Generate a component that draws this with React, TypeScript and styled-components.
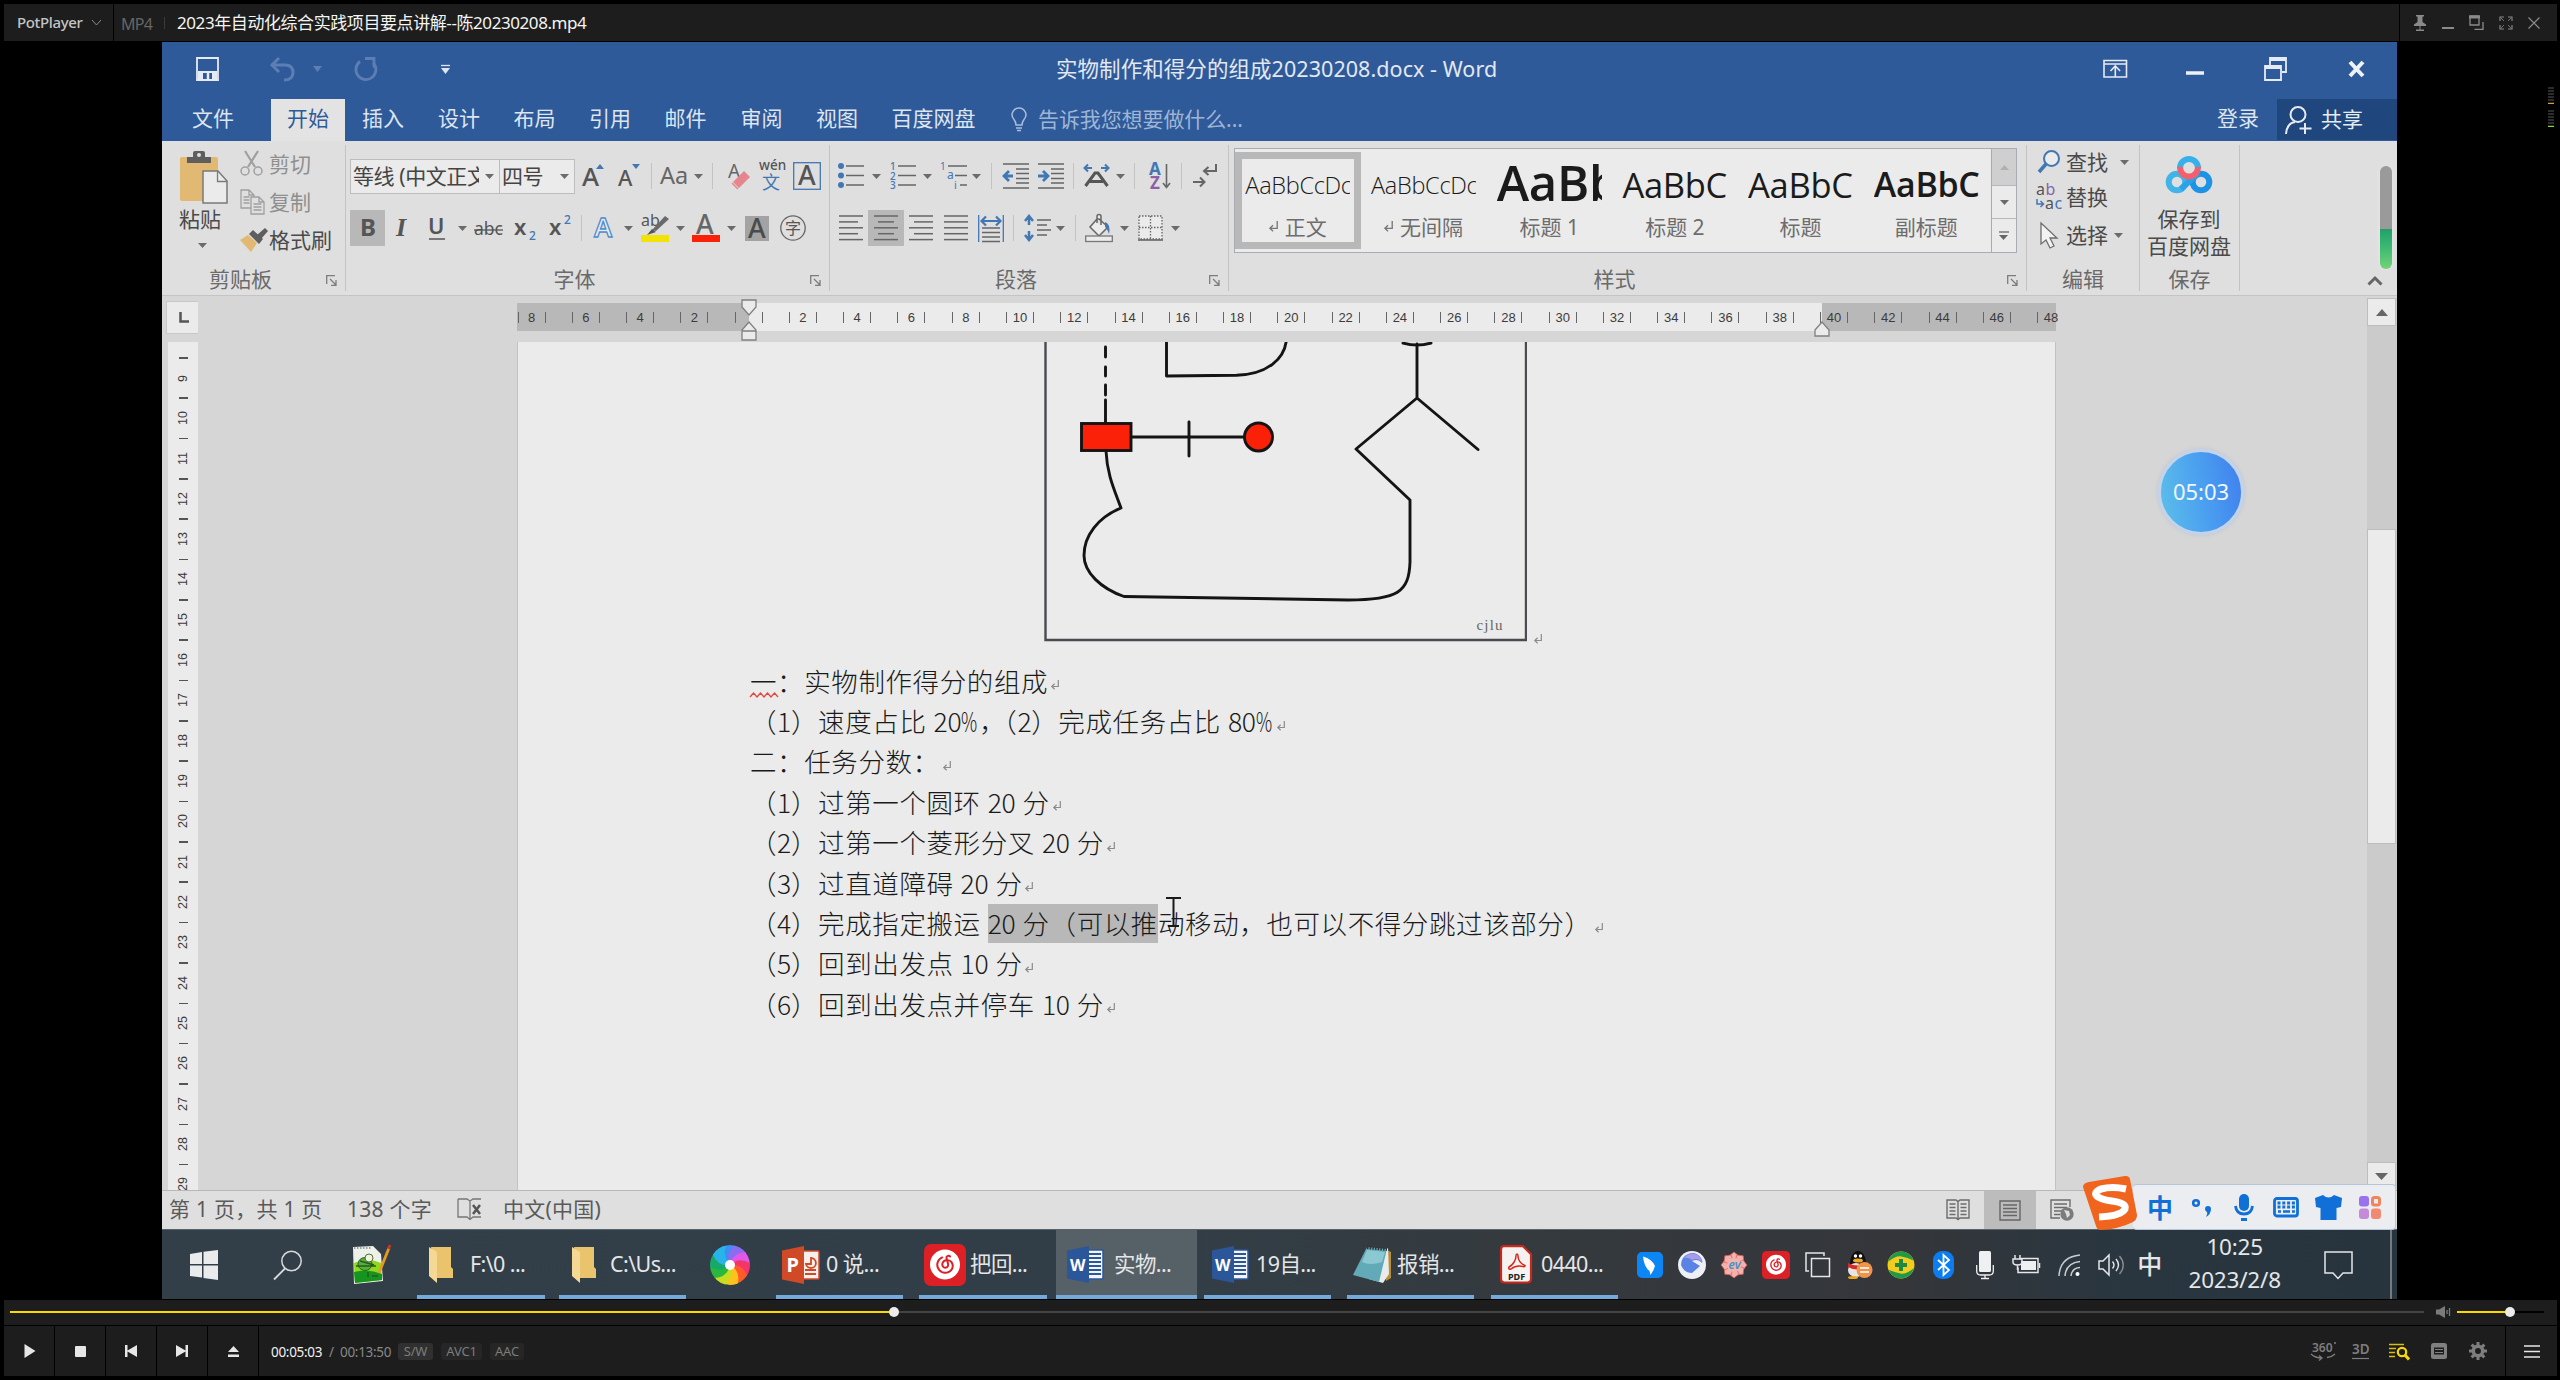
import React from 'react';
import styled, { createGlobalStyle, css } from 'styled-components';
import { SiNeteasecloudmusic } from 'react-icons/si';

const cjk = `'Noto Sans', 'Noto Sans CJK SC', sans-serif`;
const latin = `'Open Sans', 'Noto Sans', 'Noto Sans CJK SC', sans-serif`;

const Global = createGlobalStyle`
  * { box-sizing: border-box; }
  body { margin: 0; background: #000; font-family: ${cjk}; }
  svg { display: block; flex: none; overflow: visible; }
`;

/* ---------- player shell ---------- */
const Player = styled.div`
  position: relative;
  width: 2560px;
  height: 1380px;
  padding: 4px 3px 4px 4px;
  display: flex;
  flex-direction: column;
  background: #000;
  overflow: hidden;
  white-space: nowrap;
`;
const PlayerTitle = styled.header`
  height: 37px;
  display: flex;
  gap: 1px;
  margin-bottom: 1px;
`;
const Panel = styled.div<{ $w?: number; $pl?: number }>`
  ${p => (p.$w ? `width: ${p.$w}px;` : 'flex: 1;')}
  height: 100%;
  padding-left: ${p => p.$pl ?? 0}px;
  background: #1d1d1d;
  display: flex;
  align-items: center;
`;
const Brand = styled.span`
  width: 72px;
  font: 500 15px/20px ${cjk};
  letter-spacing: -0.35px;
  color: #c4c4c4;
  padding-bottom: 1px;
`;
const Format = styled.span`
  width: 43px;
  font: 16px/20px ${cjk};
  letter-spacing: -0.7px;
  color: #666;
  padding-top: 2px;
`;
const FileName = styled.span`
  margin-left: 12px;
  font: 17px/20px ${cjk};
  letter-spacing: -0.42px;
  color: #f4f4f4;
`;
const ThinRule = styled.i`
  width: 1px;
  height: 12px;
  background: #3a3a3a;
`;
const WindowIcons = styled.div`
  display: flex;
  align-items: center;
  gap: 13px;
`;
const Stage = styled.main`
  width: 2235px;
  height: 1257px;
  margin: 0 0 1px 158px;
  display: flex;
  flex-direction: column;
  background: #d6d6d6;
  position: relative;
`;

/* ---------- word: title and tabs ---------- */
const WordTitle = styled.div`
  height: 57px;
  padding: 0 0 3px 34px;
  display: flex;
  align-items: center;
  background: #2f5a99;
`;
const DocName = styled.div`
  width: 1047px;
  color: #e2e8f1;
  font: 21.5px/30px ${cjk};
  letter-spacing: 0.06px;
`;
const TabBar = styled.nav`
  height: 42px;
  display: flex;
  background: #2f5a99;
  color: #dde5f0;
  font: 21px/39px ${cjk};
`;
const Tab = styled.span<{ $w: number; $active?: boolean; $pr?: number }>`
  width: ${p => p.$w}px;
  padding-right: ${p => p.$pr ?? 0}px;
  text-align: center;
  ${p => p.$active && css`background: #e3e3e4; color: #2f5a99;`}
`;
const Ask = styled.span`
  display: flex;
  align-items: center;
  gap: 10px;
  width: 1205px;
  height: 40px;
  padding-left: 16px;
  color: #9fb5d5;
  letter-spacing: -0.1px;
`;
const Share = styled.div`
  width: 120px;
  height: 41px;
  padding-left: 8px;
  display: flex;
  align-items: center;
  gap: 9px;
  background: #1f477d;
  color: #e6ebf3;
`;

/* ---------- ribbon ---------- */
const Ribbon = styled.section`
  height: 155px;
  display: flex;
  background: #dfdfdf;
  border-bottom: 1px solid #c4c4c4;
  color: #4a4a4a;
  font: 21px/26px ${cjk};
`;
const Group = styled.div<{ $w: number }>`
  width: ${p => p.$w}px;
  height: 146px;
  margin-top: 4px;
  display: flex;
  flex-direction: column;
  justify-content: space-between;
  border-right: 1px solid #c3c3c3;
`;
const GroupLabel = styled.div<{ $pr: number }>`
  position: relative;
  height: 26px;
  margin-bottom: -1px;
  padding-right: ${p => p.$pr}px;
  display: flex;
  justify-content: center;
  color: #6a6a6a;
`;
const Launcher = styled.span`
  position: absolute;
  right: 8px;
  top: 9px;
`;
const ToolRows = styled.div`
  padding-top: 5px;
`;
const Tools = styled.div`
  height: 52px;
  display: flex;
  align-items: center;
  padding-left: 4px;
`;
const Slot = styled.span<{ $w: number; $h?: number; $on?: boolean }>`
  width: ${p => p.$w}px;
  height: ${p => p.$h ?? 36}px;
  display: flex;
  align-items: center;
  justify-content: center;
  background: ${p => (p.$on ? '#b8b8b8' : 'transparent')};
`;
const Divider = styled.span<{ $w: number }>`
  width: ${p => p.$w}px;
  display: flex;
  justify-content: center;
  &::before { content: ''; width: 1px; height: 26px; background: #c3c3c3; }
`;
const Combo = styled.div<{ $w: number }>`
  width: ${p => p.$w}px;
  height: 35px;
  padding: 0 5px 0 2px;
  display: flex;
  align-items: center;
  justify-content: space-between;
  border: 1.5px solid #bdbdbd;
  background: #ebebeb;
  & + & { border-left: 0; }
`;
const ComboText = styled.span<{ $w: number }>`
  width: ${p => p.$w}px;
  overflow: hidden;
  letter-spacing: -0.4px;
  color: #444;
`;
const ClipBody = styled.div`
  display: flex;
  padding: 6px 0 0 17px;
`;
const PasteCol = styled.div`
  width: 61px;
  display: flex;
  flex-direction: column;
  align-items: flex-start;
`;
const PasteText = styled.span`
  margin: 1px 0 11px;
`;
const StackCol = styled.div`
  display: flex;
  flex-direction: column;
  margin-top: -1px;
`;
const StackRow = styled.div<{ $iw: number; $dim?: boolean; $h: number }>`
  height: ${p => p.$h}px;
  display: grid;
  grid-template-columns: ${p => p.$iw}px auto auto;
  justify-content: start;
  align-items: center;
  color: ${p => (p.$dim ? '#8f8f8f' : '#4a4a4a')};
`;
const Gallery = styled.div`
  margin: 3px 0 0 5px;
  width: 783px;
  height: 105px;
  display: flex;
  background: #ebebeb;
  border: 1px solid #a9adb3;
`;
const StyleCard = styled.div<{ $on?: boolean }>`
  width: 125.7px;
  height: 97px;
  margin-top: 3px;
  display: flex;
  flex-direction: column;
  align-items: center;
  box-shadow: ${p => (p.$on ? 'inset 0 0 0 7px #b8b8b8' : 'none')};
`;
const Sample = styled.div<{ $size: number; $weight: number; $lh: number }>`
  width: 105px;
  height: 60px;
  overflow: hidden;
  color: #1b1b1b;
  font: ${p => p.$weight} ${p => p.$size}px/${p => p.$lh}px ${latin};
  letter-spacing: -0.3px;
`;
const StyleName = styled.span`
  display: flex;
  align-items: center;
  gap: 7px;
  color: #6d6d6d;
  margin-top: 2px;
`;
const GalleryButtons = styled.div`
  width: 25px;
  margin-left: auto;
  display: grid;
  grid-template-rows: 36px 33px 1fr;
  border-left: 1px solid #a9adb3;
`;
const GalleryButton = styled.span<{ $off?: boolean }>`
  display: flex;
  align-items: center;
  justify-content: center;
  background: ${p => (p.$off ? '#cfcfcf' : '#ebebeb')};
  & + & { border-top: 1px solid #b5b8bc; }
`;
const EditBody = styled.div`
  margin-top: -1px;
`;
const SaveBody = styled.div`
  display: flex;
  flex-direction: column;
  align-items: center;
  padding: 9px 1px 0 0;
  line-height: 27px;
  & > svg { margin-bottom: 12px; }
`;
const RibbonEnd = styled.div`
  flex: 1;
  display: flex;
  flex-direction: column;
  align-items: flex-end;
  padding: 25px 5px 0 0;
`;
const Pill = styled.span`
  width: 12px;
  height: 103px;
  border-radius: 6px;
  background: linear-gradient(#9a9a9a 61%, #1fa168 61%, #3fba72 80%, #74d377);
  box-shadow: 0 0 4px #e9e9e9;
  margin-bottom: 6px;
`;
const Collapse = styled.span`
  margin-right: 9px;
`;

/* ---------- document ---------- */
const DocArea = styled.section`
  height: 894px;
  display: grid;
  grid-template-columns: 36px 1fr 30px;
`;
const VRuler = styled.div`
  padding: 5px 0 0 4px;
  display: flex;
  flex-direction: column;
  overflow: hidden;
`;
const TabStop = styled.div`
  width: 35px;
  height: 33px;
  margin-bottom: 8px;
  flex: none;
  display: grid;
  place-items: center;
  background: #ebebeb;
  border: 1px solid #c8c8c8;
`;
const VStrip = styled.div`
  width: 30px;
  margin-left: 2px;
  padding: 15px 0 0 1px;
  flex: 1;
  background: #ebebeb;
  display: flex;
  flex-direction: column;
  font: 12.5px/13px 'Liberation Sans', sans-serif;
  color: #3c3c3c;
  overflow: hidden;
`;
const VMark = styled.div`
  height: 40.35px;
  flex: none;
  display: flex;
  flex-direction: column;
  align-items: center;
  &::before { content: ''; width: 9px; height: 1.5px; background: #555; margin-bottom: 12px; }
`;
const VNum = styled.span`
  height: 15px;
  writing-mode: vertical-rl;
  transform: rotate(180deg);
  text-align: center;
`;
const Canvas = styled.div`
  display: flex;
  flex-direction: column;
  padding: 7px 0 0 319px;
`;
const HRuler = styled.div`
  position: relative;
  width: 1539px;
  height: 28px;
  flex: none;
  padding-top: 1px;
  display: flex;
  align-items: center;
  background: linear-gradient(90deg, #b8b8b8 232px, #ebebeb 232px, #ebebeb 1305px, #b8b8b8 1305px);
  color: #3c3c3c;
  font: 13px/16px 'Liberation Sans', sans-serif;
`;
const HMark = styled.span<{ $first?: boolean; $last?: boolean }>`
  width: 54.28px;
  flex: none;
  margin-left: ${p => (p.$first ? '-12.500px' : '0')};
  display: flex;
  align-items: center;
  justify-content: center;
  &::before, &::after { content: ''; width: 1px; height: 11px; background: #666; flex: none; }
  &::after { opacity: ${p => (p.$last ? 0 : 1)}; }
`;
const HNum = styled.b`
  width: 26px;
  font-weight: 400;
  text-align: center;
`;
const Marker = styled.span<{ $x: number; $y: number }>`
  position: absolute;
  left: ${p => p.$x}px;
  top: ${p => p.$y}px;
`;
const Sheet = styled.article`
  position: relative;
  width: 1539px;
  flex: 1;
  margin-top: 11px;
  background: #ebebeb;
  border: solid #c2c2c2;
  border-width: 0 1px;
`;
const Picture = styled.div`
  display: flex;
  align-items: flex-end;
  gap: 7px;
  height: 302px;
  padding-left: 526px;
`;
const Body = styled.div`
  padding: 16.5px 0 0 232px;
  text-spacing-trim: space-all;
`;
const Line = styled.p`
  margin: 0;
  height: 40.4px;
  display: flex;
  align-items: center;
  color: #1a1a1a;
  font: 300 26.5px/40px 'Noto Sans CJK SC', sans-serif;
  letter-spacing: 0.6px;
`;
const Digits = styled.span<{ $pad?: boolean; $padEnd?: boolean }>`
  letter-spacing: -0.3px;
  padding-left: ${p => (p.$pad ? 7 : 0)}px;
  padding-right: ${p => (p.$pad || p.$padEnd ? 7 : 0)}px;
`;
const Percent = styled.span`
  display: inline-block;
  width: 17px;
  margin-left: -7px;
  margin-right: 1px;
  transform: scaleX(0.68);
  transform-origin: left;
`;
const HalfComma = styled.span`
  width: 11px;
`;
const Misspelt = styled.span`
  position: relative;
  & > svg { position: absolute; left: 0; top: 31px; }
`;
const Selected = styled.span`
  display: flex;
  height: 39px;
  align-items: center;
  background: #b8b8b8;
`;
const ReturnMark = styled.span`
  margin: 9px 0 0 3px;
`;
const Beam = styled.span`
  position: absolute;
  left: 647px;
  top: 555px;
`;
const ScrollTrack = styled.div`
  margin-top: 2px;
  display: flex;
  flex-direction: column;
  background: #cbcbcb;
  padding-right: 1px;
`;
const ScrollButton = styled.span`
  height: 28px;
  display: grid;
  place-items: center;
  background: #ebebeb;
  border: 1px solid #bdbdbd;
`;
const ScrollThumb = styled.span`
  height: 315px;
  margin: 203px 0 318px;
  background: #ebebeb;
  border: 1px solid #bdbdbd;
`;

/* ---------- status bar ---------- */
const Status = styled.footer`
  height: 39px;
  padding-left: 7px;
  display: flex;
  align-items: center;
  border-top: 1px solid #b8b8b8;
  background: #dfdfdf;
  color: #5a5a5a;
  font: 21px/34px ${cjk};
`;
const StatusItem = styled.span<{ $w: number }>`
  width: ${p => p.$w}px;
  padding-bottom: 2px;
  letter-spacing: 0.25px;
`;
const ViewButton = styled.span<{ $on?: boolean }>`
  width: 52px;
  height: 38px;
  display: grid;
  place-items: center;
  background: ${p => (p.$on ? '#bcbcbc' : 'transparent')};
`;
const Views = styled.div`
  margin-left: auto;
  margin-right: 309px;
  display: flex;
`;

/* ---------- windows taskbar ---------- */
const Taskbar = styled.footer`
  height: 70px;
  display: flex;
  align-items: stretch;
  background: linear-gradient(90deg, #323e48, #323e47 45%, #343a3e 60%, #34363a 78%, #293640 88%, #27343e);
  border-top: 1px solid #59636b;
  color: #e4e6e8;
  font: 21.5px/30px ${cjk};
`;
const PinnedIcon = styled.span<{ $w: number }>`
  width: ${p => p.$w}px;
  display: grid;
  place-items: center;
`;
const Task = styled.div<{ $w: number; $gap: number; $on?: boolean }>`
  width: ${p => p.$w}px;
  margin-right: ${p => p.$gap}px;
  display: flex;
  align-items: center;
  padding-top: 2px;
  border-bottom: 4px solid #74a9dc;
  background: ${p => (p.$on ? '#566067' : 'transparent')};
`;
const TaskIcon = styled.span<{ $w: number }>`
  width: ${p => p.$w}px;
  padding-top: 2px;
  display: flex;
  justify-content: center;
`;
const TaskLabel = styled.span`
  letter-spacing: -0.6px;
`;
const Tray = styled.div`
  display: flex;
  margin-left: 11px;
`;
const TrayIcon = styled.span`
  width: 41.9px;
  display: grid;
  place-items: center;
`;
const TrayIme = styled.span`
  width: 36px;
  font: 500 25px/66px 'Noto Sans CJK SC', sans-serif;
  text-align: center;
`;
const Clock = styled.div`
  width: 134px;
  display: flex;
  flex-direction: column;
  align-items: center;
  padding-top: 1px;
  font: 22.5px/32.5px 'Noto Sans', sans-serif;
  letter-spacing: -0.2px;
`;
const Notify = styled.span`
  width: 73px;
  display: grid;
  place-items: center;
`;
const ShowDesktop = styled.i`
  width: 2px;
  margin-left: 15px;
  background: #737b81;
`;

/* ---------- floating widgets ---------- */
const Timer = styled.div`
  position: absolute;
  left: 1996px;
  top: 407px;
  width: 86px;
  height: 86px;
  padding-bottom: 2px;
  border-radius: 50%;
  border: 3px solid #c3d3ea;
  box-shadow: 0 0 4px #b9c3d4;
  display: grid;
  place-items: center;
  background: linear-gradient(80deg, #5cc0ea, #4a9df0 55%, #3f7fee);
  color: #f0f6fd;
  font: 22px/30px 'Noto Sans', sans-serif;
`;
const ImeBar = styled.div`
  position: absolute;
  left: 1921px;
  top: 1134px;
  width: 313px;
  height: 54px;
  display: flex;
  align-items: flex-end;
`;
const ImeStrip = styled.div`
  width: 274px;
  height: 46px;
  margin: 0 0 0 -4px;
  padding-left: 7px;
  display: grid;
  grid-template-columns: 40px 43px 41px 43px 42px 41px;
  place-items: center;
  align-content: center;
  background: #ebedf1;
  border: 1.5px solid #b4c6da;
  border-left: 0;
  border-radius: 4px;
  color: #1070d8;
  font: 700 26px/34px 'Noto Sans CJK SC', sans-serif;
`;
const ImeLogo = styled.span`
  position: relative;
  z-index: 1;
`;
const Meter = styled.div<{ $y: number; $c: string }>`
  position: absolute;
  right: 6px;
  top: ${p => p.$y}px;
  width: 6px;
  height: 17px;
  background: repeating-linear-gradient(#2c2c2c 0 2px, transparent 2px 3px);
  border-bottom: 1px solid ${p => p.$c};
`;

/* ---------- player controls ---------- */
const SeekRow = styled.div`
  height: 25px;
  margin-bottom: 1px;
  padding: 0 0 1px 6px;
  display: flex;
  align-items: center;
  background: #1d1d1d;
`;
const Seek = styled.div<{ $w: number; $rest: string }>`
  width: ${p => p.$w}px;
  height: 2px;
  display: flex;
  align-items: center;
  background: ${p => p.$rest};
`;
const Played = styled.i`
  height: 2px;
  background: #fbd800;
`;
const Knob = styled.i`
  width: 10px;
  height: 10px;
  margin-left: -5px;
  border-radius: 50%;
  background: #ececec;
`;
const Controls = styled.div`
  height: 50px;
  display: flex;
  gap: 1px;
`;
const ControlButton = styled.button<{ $w?: number }>`
  width: ${p => p.$w ?? 50}px;
  height: 50px;
  padding: 0;
  border: 0;
  display: grid;
  place-items: center;
  background: #1d1d1d;
`;
const Time = styled.span<{ $c: string; $w: number }>`
  width: ${p => p.$w}px;
  color: ${p => p.$c};
  font: 13.5px/18px 'Noto Sans', sans-serif;
  letter-spacing: -0.3px;
  padding-top: 2px;
`;
const Badge = styled.span<{ $w: number; $bg: string }>`
  width: ${p => p.$w}px;
  height: 17px;
  margin-right: 8px;
  border-radius: 3px;
  background: ${p => p.$bg};
  color: #7c7c7c;
  font: 13px/17px 'Noto Sans', sans-serif;
  letter-spacing: -0.2px;
  text-align: center;
`;
const Extras = styled.div`
  margin-left: auto;
  display: grid;
  grid-template-columns: 42px 37px 42px 38px 36px;
  align-items: center;
`;

/* ---------- small shared drawings ---------- */
const Svg = ({ w, h, children, vb }: { w: number; h: number; vb?: string; children: React.ReactNode }) => (
  <svg width={w} height={h} viewBox={vb ?? `0 0 ${w} ${h}`} fill="none">{children}</svg>
);
const Caret = ({ c = '#6b6b6b' }: { c?: string }) => (
  <Svg w={9} h={5}><path d="M0 0h9L4.500 5z" fill={c} /></Svg>
);
const CaretSlot = ({ w }: { w: number }) => <Slot $w={w}><Caret /></Slot>;
const LauncherIcon = () => (
  <Launcher>
    <Svg w={11} h={11}><path d="M.7 9V.7H9M4 4l5.500 5.500M10 5v5.300H5" stroke="#7c7c7c" strokeWidth="1.300" /></Svg>
  </Launcher>
);
const Label = ({ children, end = true }: { children: string; end?: boolean }) => (
  <GroupLabel $pr={end ? 26 : 0}>{children}{end && <LauncherIcon />}</GroupLabel>
);
const Ret = ({ s = 8, c = '#8b8b8b' }: { s?: number; c?: string }) => (
  <Svg w={s} h={s * 1.25} vb="0 0 8 10"><path d="M7.300 0v6.500H1M3.600 3.800L.8 6.500l2.800 2.700" stroke={c} strokeWidth="1.200" /></Svg>
);
const Glyph = ({ x, y, s, c = '#555', w = 400, f = 'Noto Sans', i, children }: any) => (
  <text x={x} y={y} fontSize={s} fill={c} fontWeight={w} fontStyle={i ? 'italic' : 'normal'} fontFamily={f === 'cjk' ? 'Noto Sans CJK SC' : f}>{children}</text>
);
const Rows = ({ spans }: { spans: [number, number][] }) => (
  <Svg w={24} h={26}>
    {spans.map(([a, b], i) => <path key={i} d={`M${a} ${1 + i * 5.9}H${b}`} stroke="#666" strokeWidth="1.500" />)}
  </Svg>
);
const Netease = ({ s }: { s: number }) => (
  <svg width={s} height={s} viewBox="0 0 42 42">
    <rect width="42" height="42" rx="7" fill="#dd1f26" />
    <g transform="translate(6 5.500)"><SiNeteasecloudmusic size={30} color="#fff" /></g>
  </svg>
);
const WordIcon = () => (
  <Svg w={37} h={37}>
    <rect x="20" y="4" width="16" height="29" rx="1" fill="#f2f4f8" stroke="#2b579a" strokeWidth="1.500" />
    <path d="M22 8h12M22 12h12M22 16h12M22 20h12M22 24h12M22 28h12" stroke="#2b579a" strokeWidth="1.800" />
    <path d="M0 4.500L22 0v37L0 32.500z" fill="#2b579a" />
    <Glyph x={3} y={24.500} s={16} c="#fff" w={700}>W</Glyph>
  </Svg>
);
const Folder = () => (
  <Svg w={25} h={36}>
    <path d="M2 0h20v20l2 2v9H8z" fill="#e9c46c" />
    <path d="M0 0l8 5v31l-8-7z" fill="#f5d893" />
  </Svg>
);

const vNumbers = Array.from({ length: 21 }, (_, i) => i + 9);
const hNumbers = Array.from({ length: 29 }, (_, i) => Math.abs(i * 2 - 8));

const RibbonBar = () => (
  <Ribbon>
    <Group $w={184}>
      <ClipBody>
        <PasteCol>
          <Svg w={49} h={54}>
            <rect x="1" y="6" width="38" height="44" rx="2" fill="#e2b972" />
            <path d="M8 12V6h6V2q0-2 2-2h8q2 0 2 2v4h6v6z" fill="#5e5e5e" /><circle cx="20" cy="4" r="2" fill="#dfdfdf" />
            <path d="M24 20h15l9 10v22H24z" fill="#ebebeb" stroke="#7a7a7a" strokeWidth="1.500" /><path d="M38.500 20v10.500H48" stroke="#7a7a7a" strokeWidth="1.300" />
          </Svg>
          <PasteText>粘贴</PasteText>
          <Svg w={45} h={5}><path d="M19 0h9l-4.500 5z" fill="#6b6b6b" /></Svg>
        </PasteCol>
        <StackCol>
          <StackRow $iw={29} $h={27} $dim>
            <Svg w={24} h={25}>
              <path d="M5 0l10 16M18 0L8 16" stroke="#a0a0a0" strokeWidth="2.200" />
              <circle cx="5" cy="20" r="4" stroke="#a0a0a0" strokeWidth="1.500" /><circle cx="18" cy="20" r="4" stroke="#a0a0a0" strokeWidth="1.500" />
            </Svg>剪切
          </StackRow>
          <StackRow $iw={29} $h={49} $dim>
            <Svg w={25} h={26}>
              <path d="M1 1h8l5 5v13H1zM9 1v5h5M3.500 8h6M3.500 11h6M3.500 14h6" stroke="#a0a0a0" strokeWidth="1.300" />
              <path d="M11 8h8l5 5v12H11z" fill="#dfdfdf" stroke="#a0a0a0" strokeWidth="1.300" /><path d="M19 8v5h5M13.500 15h8M13.500 18h8M13.500 21h8" stroke="#a0a0a0" strokeWidth="1.300" />
            </Svg>复制
          </StackRow>
          <StackRow $iw={29} $h={28}>
            <Svg w={28} h={24}>
              <path d="M0 12l8-5 9 8-6 9z" fill="#e2b972" /><path d="M9 6l4-4 10 9-4 5z" fill="#5e5e5e" /><path d="M17 7l8-7 3 3-7 8z" fill="#5e5e5e" />
            </Svg>格式刷
          </StackRow>
        </StackCol>
      </ClipBody>
      <Label>剪贴板</Label>
    </Group>

    <Group $w={484}>
      <ToolRows>
        <Tools>
          <Combo $w={150}><ComboText $w={126}>等线 (中文正文</ComboText><Caret /></Combo>
          <Combo $w={75}><ComboText $w={50}>四号</ComboText><Caret /></Combo>
          <Slot $w={35}><Svg w={22} h={26}><Glyph x={0} y={23} s={26} w={500}>A</Glyph><path d="M14 6l4-5 4 5z" fill="#4377b4" /></Svg></Slot>
          <Slot $w={37}><Svg w={22} h={26}><Glyph x={0} y={23} s={22} w={500}>A</Glyph><path d="M14 1h8l-4 5z" fill="#4377b4" /></Svg></Slot>
          <Divider $w={8} />
          <Slot $w={38}><Svg w={28} h={26}><Glyph x={0} y={21} s={23.500} c="#666">Aa</Glyph></Svg></Slot>
          <CaretSlot w={10} />
          <Divider $w={19} />
          <Slot $w={33}><Svg w={22} h={27}><Glyph x={0} y={15} s={19} c="#666">A</Glyph><path d="M5 19L16 8l6 6-11 11z" fill="#e5868f" /><path d="M4 20l6 6" stroke="#e5868f" strokeWidth="1.500" /></Svg></Slot>
          <Slot $w={33}><Svg w={25} h={30}><Glyph x={0} y={9} s={13.500} w={500}>wén</Glyph><Glyph x={3} y={27.500} s={18} c="#4377b4" f="cjk">文</Glyph></Svg></Slot>
          <Slot $w={37}><Svg w={28} h={28}><rect x=".7" y=".7" width="26.600" height="26.600" stroke="#4377b4" strokeWidth="1.300" /><Glyph x={5} y={23} s={27} w={500}>A</Glyph></Svg></Slot>
        </Tools>
        <Tools>
          <Slot $w={35} $on><Svg w={16} h={22}><Glyph x={0} y={19} s={24} w={700}>B</Glyph></Svg></Slot>
          <Slot $w={33}><Svg w={14} h={22}><Glyph x={1} y={19} s={26} w={700} i f="Liberation Serif">I</Glyph></Svg></Slot>
          <Slot $w={37}><Svg w={18} h={24}><Glyph x={0} y={18} s={22} w={600}>U</Glyph><path d="M1 23h16" stroke="#555" strokeWidth="1.500" /></Svg></Slot>
          <CaretSlot w={15} />
          <Slot $w={38}><Svg w={30} h={22}><Glyph x={0} y={18} s={17.500}>abc</Glyph><path d="M0 13h29" stroke="#555" strokeWidth="1.300" /></Svg></Slot>
          <Slot $w={35}><Svg w={23} h={26}><Glyph x={0} y={20} s={22} w={600}>x</Glyph><Glyph x={15} y={25} s={12} c="#4377b4" w={500}>2</Glyph></Svg></Slot>
          <Slot $w={35}><Svg w={23} h={26}><Glyph x={0} y={20} s={22} w={600}>x</Glyph><Glyph x={15} y={9} s={12} c="#4377b4" w={500}>2</Glyph></Svg></Slot>
          <Divider $w={7} />
          <Slot $w={38}><Svg w={20} h={26}><text x="0" y="22" fontSize="27" fontFamily="Noto Sans" fontWeight="600" fill="#e6ecf4" stroke="#4f8ccb" strokeWidth="1.300">A</text></Svg></Slot>
          <CaretSlot w={10} />
          <Slot $w={43}><Svg w={28} h={28}><Glyph x={0} y={12} s={16} c="#555">ab</Glyph><path d="M24 2l4 3-13 12-4-1z" fill="#6a6a6a" /><path d="M11 15l4 3-9 3z" fill="#555" /><rect y="21" width="28" height="7" fill="#f2e205" /></Svg></Slot>
          <CaretSlot w={9} />
          <Slot $w={42}><Svg w={28} h={28}><Glyph x={4} y={20} s={27} w={500} c="#666">A</Glyph><rect y="21" width="28" height="7" fill="#fb2008" /></Svg></Slot>
          <CaretSlot w={9} />
          <Slot $w={41}><Svg w={24} h={25}><rect width="24" height="25" fill="#a3a3a3" /><Glyph x={3} y={22} s={27} w={500} c="#4b4b4b">A</Glyph></Svg></Slot>
          <Slot $w={31}><Svg w={26} h={26}><circle cx="13" cy="13" r="12.200" stroke="#666" strokeWidth="1.300" /><Glyph x={5} y={19} s={16} f="cjk">字</Glyph></Svg></Slot>
        </Tools>
      </ToolRows>
      <Label>字体</Label>
    </Group>

    <Group $w={399}>
      <ToolRows>
        <Tools>
          <Slot $w={34}><Svg w={26} h={26}>{[3, 12.500, 22].map(y => <g key={y}><circle cx="3" cy={y} r="3" fill="#4377b4" /><path d={`M8 ${y}h18`} stroke="#666" strokeWidth="1.500" /></g>)}</Svg></Slot>
          <CaretSlot w={17} />
          <Slot $w={36}><Svg w={26} h={26}>{[3, 12.500, 22].map((y, i) => <g key={y}><Glyph x={0} y={y + 4} s={10} c="#4377b4" w={500}>{i + 1}</Glyph><path d={`M8 ${y}h18`} stroke="#666" strokeWidth="1.500" /></g>)}</Svg></Slot>
          <CaretSlot w={13} />
          <Slot $w={38}><Svg w={27} h={26}><Glyph x={0} y={7} s={10} c="#4377b4">1</Glyph><Glyph x={7} y={16} s={12} c="#4377b4">a</Glyph><Glyph x={14} y={26} s={11} c="#4377b4">i</Glyph><path d="M8 3h19M15 12.500h12M20 22h7" stroke="#666" strokeWidth="1.500" /></Svg></Slot>
          <CaretSlot w={9} />
          <Divider $w={20} />
          <Slot $w={30}><Svg w={26} h={26}><path d="M0 1h26M13 6h13M13 10.500h13M13 15.500h13M13 20h13M0 25h26" stroke="#666" strokeWidth="1.300" /><path d="M10 13H2M6 8l-5 5 5 5" stroke="#4377b4" strokeWidth="2.800" /></Svg></Slot>
          <Slot $w={39}><Svg w={26} h={26}><path d="M0 1h26M13 6h13M13 10.500h13M13 15.500h13M13 20h13M0 25h26" stroke="#666" strokeWidth="1.300" /><path d="M0 13h9M5 8l5 5-5 5" stroke="#4377b4" strokeWidth="2.800" /></Svg></Slot>
          <Divider $w={7} />
          <Slot $w={39}><Svg w={27} h={26}><path d="M9 5H1.500M5 1.500L1.500 5 5 8.500M18 5h7.500M22 1.500L25.500 5 22 8.500" stroke="#4377b4" strokeWidth="2" /><path d="M2.500 23l9.500-13h3l9.500 13M7 18.500h13" stroke="#555" strokeWidth="3" /></Svg></Slot>
          <CaretSlot w={8} />
          <Divider $w={21} />
          <Slot $w={30}><Svg w={22} h={28}><Glyph x={0} y={13} s={17} c="#4377b4" w={700}>A</Glyph><Glyph x={1} y={27} s={17} c="#8d5fa8" w={700}>Z</Glyph><path d="M17.500 2v23M14 21l3.500 4.500 3.500-4.500" stroke="#666" strokeWidth="1.600" /></Svg></Slot>
          <Divider $w={12} />
          <Slot $w={36}><Svg w={24} h={24}><path d="M23 0v7H12M15.500 3L11 7l4.500 4M0 18h11M7 13.500l4.500 4.500L7 22.500" stroke="#666" strokeWidth="2" /></Svg></Slot>
        </Tools>
        <Tools>
          <Slot $w={34}><Rows spans={[[0, 24], [0, 19], [0, 24], [0, 19], [0, 24]]} /></Slot>
          <Slot $w={36} $on><Rows spans={[[0, 24], [4, 20], [0, 24], [4, 20], [0, 24]]} /></Slot>
          <Slot $w={34}><Rows spans={[[0, 24], [5, 24], [0, 24], [5, 24], [0, 24]]} /></Slot>
          <Slot $w={36}><Rows spans={[[0, 24], [0, 24], [0, 24], [0, 24], [0, 24]]} /></Slot>
          <Slot $w={34}><Svg w={26} h={27}><path d="M.7 0v27M25.300 0v27" stroke="#4377b4" strokeWidth="1.300" /><path d="M4 6h18M8 1.500L3.500 6 8 10.500M18 1.500L22.500 6 18 10.500" stroke="#4377b4" strokeWidth="2.200" /><path d="M4 13h18M4 17.500h18M4 22h18M4 26.500h18" stroke="#666" strokeWidth="1.300" /></Svg></Slot>
          <Divider $w={11} />
          <Slot $w={37}><Svg w={27} h={26}><path d="M5 1v9M1 6l4-5 4 5M5 25v-9M1 20l4 5 4-5" stroke="#4377b4" strokeWidth="2.500" /><path d="M13 5h14M13 10h10M13 15h14M13 20h10" stroke="#666" strokeWidth="1.500" /></Svg></Slot>
          <CaretSlot w={9} />
          <Divider $w={20} />
          <Slot $w={28}><Svg w={28} h={28}><path d="M12 5L5 13l9 9 9-9-9-8zM12 9V2.500q0-2 2-2t2 2V11" stroke="#666" strokeWidth="1.500" fill="#ebebeb" /><path d="M20 8q6 2 4 12-2-6-4-7z" fill="#4377b4" /><rect x=".7" y="22" width="26.600" height="5.500" fill="#ebebeb" stroke="#777" strokeWidth="1.300" /></Svg></Slot>
          <CaretSlot w={22} />
          <Slot $w={30}><Svg w={25} h={26}><rect x="1" y="1" width="23" height="23" fill="#ebebeb" stroke="#666" strokeWidth="1.300" strokeDasharray="1.500 1.500" /><path d="M12.500 1v24M1 12.500h24" stroke="#666" strokeWidth="1.300" strokeDasharray="1.500 1.500" /><path d="M0 25h25" stroke="#666" strokeWidth="1.600" /></Svg></Slot>
          <CaretSlot w={20} />
        </Tools>
      </ToolRows>
      <Label>段落</Label>
    </Group>

    <Group $w={798}>
      <Gallery>
        {([
          ['AaBbCcDc', 23.5, 300, '正文', true, 66],
          ['AaBbCcDc', 23.5, 300, '无间隔', true, 66],
          ['AaBb', 49, 600, '标题 1', false, 60],
          ['AaBbC', 34.5, 400, '标题 2', false, 65],
          ['AaBbC', 34.5, 400, '标题', false, 65],
          ['AaBbC', 34, 600, '副标题', false, 65],
        ] as [string, number, number, string, boolean, number][]).map(([t, s, w, n, r, lh], i) => (
          <StyleCard key={n} $on={i === 0}>
            <Sample $size={s} $weight={w} $lh={lh}>{t}</Sample>
            <StyleName>{r && <Ret s={9} c="#777" />}{n}</StyleName>
          </StyleCard>
        ))}
        <GalleryButtons>
          <GalleryButton $off><Svg w={9} h={5}><path d="M0 5h9L4.500 0z" fill="#b0b0b0" /></Svg></GalleryButton>
          <GalleryButton><Caret /></GalleryButton>
          <GalleryButton><Svg w={10} h={9}><path d="M0 1h10" stroke="#666" strokeWidth="1.300" /><path d="M0 4h9L4.500 9z" fill="#666" /></Svg></GalleryButton>
        </GalleryButtons>
      </Gallery>
      <Label>样式</Label>
    </Group>

    <Group $w={113}>
      <EditBody>
        <StackRow $iw={39} $h={33}>
          <Svg w={34} h={24}><circle cx="24.500" cy="8.500" r="7.500" stroke="#4377b4" strokeWidth="2" fill="#ebebeb" /><path d="M19 14l-7 8" stroke="#4377b4" strokeWidth="3.500" /></Svg>
          查找<Slot $w={32}><Caret /></Slot>
        </StackRow>
        <StackRow $iw={39} $h={40}>
          <Svg w={36} h={27}><Glyph x={9} y={11} s={16}>a</Glyph><Glyph x={18.500} y={11} s={16} c="#8d5fa8">b</Glyph><path d="M10 15v5h6M13.500 17l3 3-3 3" stroke="#4377b4" strokeWidth="1.500" /><Glyph x={18} y={25} s={16}>a</Glyph><Glyph x={27.500} y={25} s={16} c="#4377b4">c</Glyph></Svg>
          替换
        </StackRow>
        <StackRow $iw={39} $h={32}>
          <Svg w={34} h={27}><path d="M14 1v21l5-4 4 8 4-2-4-8h7z" fill="#f3f3f3" stroke="#6d6d6d" strokeWidth="1.300" /></Svg>
          选择<Slot $w={20}><Caret /></Slot>
        </StackRow>
      </EditBody>
      <Label end={false}>编辑</Label>
    </Group>

    <Group $w={100}>
      <SaveBody>
        <Svg w={46} h={40}>
          <path d="M14 14a9 9 0 0 1 18 0" stroke="#37b0ea" strokeWidth="6" />
          <circle cx="11" cy="28" r="8.300" stroke="#3fb4e8" strokeWidth="6" /><circle cx="35" cy="28" r="8.300" stroke="#1e93e6" strokeWidth="6" />
          <path d="M15 35L32 19" stroke="#2ba2e8" strokeWidth="6" />
          <path d="M14 13a9 9.500 0 0 0 18 0" stroke="#f2606e" strokeWidth="6" />
        </Svg>
        <span>保存到</span><span>百度网盘</span>
      </SaveBody>
      <Label end={false}>保存</Label>
    </Group>

    <RibbonEnd>
      <Pill />
      <Collapse><Svg w={16} h={11}><path d="M1.500 9.500L8 3l6.500 6.500" stroke="#666" strokeWidth="3" /></Svg></Collapse>
    </RibbonEnd>
  </Ribbon>
);

const Drawing = () => (
  <svg width="483" height="302" viewBox="1045 342 483 302" fill="none" stroke="#141414" strokeWidth="2.900" strokeLinecap="round" strokeLinejoin="round" style={{ overflow: 'hidden' }}>
    <path d="M1046.500 342v298h480.500v-298" stroke="#4a4a50" strokeLinecap="butt" strokeLinejoin="miter" strokeWidth="2.400" />
    <path d="M1106.500 347v10M1106.500 367v9M1106.500 385v10M1106.500 400v24M1132 437h115M1190 422v34" />
    <path d="M1167.500 340v36l70-.7c30-1 49-16 50-37" />
    <path d="M1404 343q14 4 28 0M1418 344v54l61 51.500M1418 398l-61 51 54 51v62c-1 30-12 38-62 38l-224-3.500c-23-8-40-24-40-41 0-20 14-38 37-47.500-7-19-14-34-15-57" />
    <rect x="1082.500" y="423.500" width="49.500" height="27" fill="#fb2008" strokeLinejoin="miter" />
    <circle cx="1259.500" cy="437" r="14" fill="#fb2008" />
    <text x="1477.500" y="630" fontSize="15" fontFamily="Liberation Serif" stroke="none" fill="#666" letterSpacing="1.200">cjlu</text>
  </svg>
);

const item = (n: number, text: string, score: string, tail = '分') => (
  <Line key={n}>（<Digits>{n}</Digits>）{text}<Digits $pad>{score}</Digits>{tail}<ReturnMark><Ret /></ReturnMark></Line>
);

const Document = () => (
  <DocArea>
    <VRuler>
      <TabStop><Svg w={10} h={11}><path d="M1.500 0v9.500H10" stroke="#555" strokeWidth="2.500" /></Svg></TabStop>
      <VStrip>{vNumbers.map(n => <VMark key={n}><VNum>{n}</VNum></VMark>)}</VStrip>
    </VRuler>
    <Canvas>
      <HRuler>
        {hNumbers.map((n, i) => (
          <HMark key={i} $first={i === 0} $last={i === 28}><HNum>{n === 0 ? '' : n}</HNum></HMark>
        ))}
        <Marker $x={224} $y={-4}>
          <Svg w={16} h={42}><path d="M1 1h14v7l-7 8-7-8zM1 31l7-8 7 8v10H1zM1 32h14" fill="#ebebeb" stroke="#808080" strokeWidth="1.300" /></Svg>
        </Marker>
        <Marker $x={1297} $y={18}>
          <Svg w={16} h={16}><path d="M1 9l7-8 7 8v6H1z" fill="#ebebeb" stroke="#808080" strokeWidth="1.300" /></Svg>
        </Marker>
      </HRuler>
      <Sheet>
        <Picture><Drawing /><Ret s={8} /></Picture>
        <Body>
          <Line>
            <Misspelt>一<Svg w={30} h={6}><path d="M0 5l3.500-4 3.500 4 3.500-4L14 5l3.500-4L21 5l3.500-4L28 5" stroke="#e0483e" strokeWidth="1.300" /></Svg></Misspelt>
            ：实物制作得分的组成<ReturnMark><Ret /></ReturnMark>
          </Line>
          <Line>
            （<Digits>1</Digits>）速度占比<Digits $pad>20</Digits><Percent>%</Percent><HalfComma>，</HalfComma>（<Digits>2</Digits>）完成任务占比<Digits $pad>80</Digits><Percent>%</Percent><ReturnMark><Ret /></ReturnMark>
          </Line>
          <Line>二：任务分数：<ReturnMark><Ret /></ReturnMark></Line>
          {item(1, '过第一个圆环', '20')}
          {item(2, '过第一个菱形分叉', '20')}
          {item(3, '过直道障碍', '20')}
          <Line>
            （<Digits>4</Digits>）完成指定搬运<Digits $padEnd />
            <Selected><Digits $padEnd>20</Digits>分（可以推</Selected>动移动，也可以不得分跳过该部分）<ReturnMark><Ret /></ReturnMark>
          </Line>
          {item(5, '回到出发点', '10')}
          {item(6, '回到出发点并停车', '10')}
        </Body>
        <Beam><Svg w={17} h={30}><path d="M1 1h15M8.500 1v28M3 29h11" stroke="#1a1a1a" strokeWidth="2" /></Svg></Beam>
      </Sheet>
    </Canvas>
    <ScrollTrack>
      <ScrollButton><Svg w={12} h={7}><path d="M0 7h12L6 0z" fill="#666" /></Svg></ScrollButton>
      <ScrollThumb />
      <ScrollButton><Svg w={13} h={7}><path d="M0 0h13L6.500 7z" fill="#666" /></Svg></ScrollButton>
    </ScrollTrack>
  </DocArea>
);

const Speaker = () => (
  <Svg w={26} h={22}><path d="M1 7h4l6-6v20l-6-6H1z" stroke="#e4e6e8" strokeWidth="1.500" /><path d="M14.500 7.500q3 3.500 0 7M18 5q5 6 0 12" stroke="#e4e6e8" strokeWidth="1.400" /><path d="M21.500 2q7.500 9 0 18" stroke="#e4e6e8" strokeOpacity=".5" strokeWidth="1.400" /></Svg>
);

const WindowsBar = () => (
  <Taskbar>
    <PinnedIcon $w={84}><Svg w={28} h={30}><path d="M0 4l12-2v12H0zM13.500 1.800L28 0v14H13.500zM0 15.500h12v12L0 26zM13.500 15.500H28V30l-14.500-2z" fill="#e9ebed" /></Svg></PinnedIcon>
    <PinnedIcon $w={83}><Svg w={30} h={30}><circle cx="18.500" cy="11" r="9.700" stroke="#d7dadd" strokeWidth="1.500" /><path d="M12 18.500L1 29.500" stroke="#d7dadd" strokeWidth="1.800" /></Svg></PinnedIcon>
    <PinnedIcon $w={88}>
      <Svg w={40} h={40}>
        <path d="M0 2l20-1 8 8 2 27L1 39z" fill="#eef1ea" /><path d="M1 18q14-6 27 0l1 17L2 38z" fill="#8fd81c" /><path d="M1 27q14-4 28 2v6L2 38z" fill="#15951f" />
        <ellipse cx="12" cy="19" rx="7" ry="6.500" fill="#55b03a" stroke="#25661c" /><circle cx="16" cy="13" r="4" fill="#eef4e0" stroke="#5a6a3a" /><path d="M3 21h20M7 16l14 4M15 27v5M19 31h6" stroke="#2a5a22" strokeWidth="1.500" />
        <path d="M36 3L26 28" stroke="#e79a22" strokeWidth="2.800" /><path d="M37 0l-1.500 4" stroke="#c0392b" strokeWidth="2.800" /><path d="M1 3h18" stroke="#9aa2a6" strokeWidth="2" strokeDasharray="1.500 1.500" />
      </Svg>
    </PinnedIcon>
    <Task $w={128} $gap={14}><TaskIcon $w={48}><Folder /></TaskIcon><TaskLabel>&nbsp;F:\0 ...</TaskLabel></Task>
    <Task $w={127} $gap={0}><TaskIcon $w={51}><Folder /></TaskIcon><TaskLabel>C:\Us...</TaskLabel></Task>
    <PinnedIcon $w={88}>
      <Svg w={42} h={42}>
        {['#3f8df5', '#8a6cf0', '#e058e8', '#f4356a', '#ff5a2a', '#ffc21c', '#c9dc20', '#28b83c', '#17a86a', '#28b4e8'].map((c, i) => (
          <path key={c} transform={`rotate(${i * 36 - 20} 21 21)`} d="M21 21Q13 12 20 1q11 0 15 7-9-1-14 13z" fill={c} />
        ))}
        <circle cx="21" cy="21" r="5" fill="#fff" />
      </Svg>
    </PinnedIcon>
    <PinnedIcon $w={2} />
    <Task $w={127} $gap={16}>
      <TaskIcon $w={50}>
        <Svg w={38} h={38}><rect x="20" y="5" width="17" height="28" rx="1" fill="#f6efec" stroke="#d04a28" strokeWidth="1.500" /><path d="M24 18a5 5 0 1 0 5-6v6zM23 24h11M23 28h11" stroke="#d04a28" strokeWidth="1.800" /><path d="M0 4.500L22 0v38L0 33.500z" fill="#d04a28" /><Glyph x={4.500} y={26} s={20} c="#fff" w={700}>P</Glyph></Svg>
      </TaskIcon>
      <TaskLabel>0 说...</TaskLabel>
    </Task>
    <Task $w={128} $gap={9}><TaskIcon $w={51}><Netease s={42} /></TaskIcon><TaskLabel>把回...</TaskLabel></Task>
    <Task $w={141} $gap={7} $on><TaskIcon $w={58}><WordIcon /></TaskIcon><TaskLabel>实物...</TaskLabel></Task>
    <Task $w={127} $gap={16}><TaskIcon $w={52}><WordIcon /></TaskIcon><TaskLabel>19自...</TaskLabel></Task>
    <Task $w={127} $gap={17}>
      <TaskIcon $w={50}>
        <Svg w={38} h={38}><path d="M34 4l4 2v26l-5 3z" fill="#b98d3a" /><path d="M26 8l9-6 1 26-6 9-14-4z" fill="#e8ecec" /><path d="M14 1l20 2-8 33L0 29z" fill="#62aab8" /><path d="M14 4l18 2-3 10q-12 4-20 0z" fill="#8cc8d2" /><path d="M14 1.500l20 2" stroke="#333" strokeWidth="3" strokeDasharray="1.500 1.200" /></Svg>
      </TaskIcon>
      <TaskLabel>报销...</TaskLabel>
    </Task>
    <Task $w={127} $gap={0}>
      <TaskIcon $w={50}>
        <Svg w={32} h={39}><path d="M4 1.200h19l8 8V34q0 3.500-3.500 3.500h-23q-3.500 0-3.500-3.500V4.500Q1 1.200 4 1.200z" fill="#f5f3f1" stroke="#c9281c" strokeWidth="2.200" /><path d="M9 22c4-2 7-7 7-11q0-2 1-2t1 2c0 4 3 8 6 9 2 .5 1 2-1 1.500-5-1-9 0-12 2.500q-3 1-2-2z" stroke="#d5291d" strokeWidth="1.500" /><Glyph x={8} y={34.500} s={9} c="#222" w={700}>PDF</Glyph></Svg>
      </TaskIcon>
      <TaskLabel>0440...</TaskLabel>
    </Task>
    <Tray>
      <TrayIcon><Svg w={26} h={26}><rect width="26" height="26" rx="5" fill="#0c86f5" /><path d="M6 4.500q9 2.500 12 9.500l-1.500 4-3 5-1-4Q7 15 6 4.500z" fill="#fff" /></Svg></TrayIcon>
      <TrayIcon><Svg w={28} h={28}><circle cx="14" cy="14" r="14" fill="#eef0f6" /><path d="M3 14Q3 6 10 3q8-3 13 4 2 3 1 5-4-5-10-2l8 5-8 7q-8 0-11-8z" fill="#5b83e6" /><path d="M6 7Q10 1.500 17 3q6 2 7 8-4-5-10-2-4-3-8-2z" fill="#a99bea" /></Svg></TrayIcon>
      <TrayIcon><Svg w={28} h={28}>{[0, 45, 90, 135, 180, 225, 270, 315].map(a => <path key={a} transform={`rotate(${a} 14 14)`} d="M14 14L9 5l5-4 5 4z" fill="#f2b1ac" stroke="#dd5a55" strokeWidth=".7" />)}<circle cx="14" cy="14" r="7" fill="#f0b5b0" /><Glyph x={8.500} y={18} s={12} c="#4b8fc0" w={600} i>ev</Glyph></Svg></TrayIcon>
      <TrayIcon><Netease s={28} /></TrayIcon>
      <TrayIcon><Svg w={26} h={26}><path d="M4 19H1V1h18v3" stroke="#e4e6e8" strokeWidth="1.500" /><rect x="6.500" y="6.500" width="18" height="18" stroke="#e4e6e8" strokeWidth="1.500" /></Svg></TrayIcon>
      <TrayIcon><Svg w={27} h={28}><ellipse cx="12" cy="12" rx="8" ry="12" fill="#111" /><ellipse cx="10" cy="19" rx="8" ry="7" fill="#e9e4e0" /><path d="M2 12q10 5 19 0l1 4q-11 5-20 0z" fill="#d52b27" /><ellipse cx="12" cy="9.500" rx="5" ry="2" fill="#f0a51e" /><circle cx="9.500" cy="5" r="1.700" fill="#fff" /><circle cx="14.500" cy="5" r="1.700" fill="#fff" /><ellipse cx="7" cy="26.500" rx="5" ry="1.500" fill="#f0a51e" /><circle cx="18.500" cy="19" r="8" fill="#f0944a" /><path d="M14 17h9M14 21h9" stroke="#fff" strokeWidth="1.600" /></Svg></TrayIcon>
      <TrayIcon><Svg w={28} h={28}><circle cx="14" cy="14" r="13.500" fill="#f3cc1e" /><path d="M1 11Q4 1 14 .5q9 0 12.500 9-6-3-12-4T1 11zM27 17q-3 10-13 10.500-9 0-12.500-9 6 3 12 4T27 17z" fill="#1f9a4a" /><path d="M14 8v12M8 14h12" stroke="#1b8a43" strokeWidth="4" /></Svg></TrayIcon>
      <TrayIcon><Svg w={21} h={28}><rect width="21" height="28" rx="9" fill="#0b7df0" /><path d="M5 9l11 10-5.500 5V4L16 9 5 19" stroke="#fff" strokeWidth="1.800" /></Svg></TrayIcon>
      <TrayIcon><Svg w={18} h={28}><rect x="3" width="12" height="21" rx="1.500" fill="#eef0f2" /><path d="M.7 14v6q0 4 4 4h8.600q4 0 4-4v-6M9 24v3.500M5 27.500h8" stroke="#eef0f2" strokeWidth="1.300" /></Svg></TrayIcon>
      <TrayIcon><Svg w={28} h={20}><path d="M6 3.500h19v14H5v-5" stroke="#e4e6e8" strokeWidth="1.500" /><rect x="8" y="6" width="15" height="9" fill="#eef0f2" /><path d="M26.500 8v5M2 0v4M7 0v4M0 4h9v3q0 3-4.500 3T0 7zM4.500 10v5" stroke="#e4e6e8" strokeWidth="1.500" /></Svg></TrayIcon>
      <TrayIcon><Svg w={22} h={22}><path d="M1 22Q2 3 22 1M7 22Q8 9 22 7.500M13 22q1-8 9-8.500" stroke="#c9ccd0" strokeWidth="1.500" /><circle cx="19.500" cy="20" r="2" fill="#fff" /></Svg></TrayIcon>
      <TrayIcon><Speaker /></TrayIcon>
      <TrayIme>中</TrayIme>
      <Clock><span>10:25</span><span>2023/2/8</span></Clock>
      <Notify><Svg w={29} h={28}><path d="M1 1h27v21h-9l-5 5.500L9 22H1z" stroke="#e4e6e8" strokeWidth="1.500" /></Svg></Notify>
      <ShowDesktop />
    </Tray>
  </Taskbar>
);

export default function App() {
  return (
    <Player>
      <Global />
      <PlayerTitle>
        <Panel $w={109} $pl={13}>
          <Brand>PotPlayer</Brand>
          <Svg w={17} h={6}><path d="M3 0l4.500 5L12 0" stroke="#8a8a8a" strokeWidth="1" /></Svg>
        </Panel>
        <Panel $pl={7}><Format>MP4</Format><ThinRule /><FileName>2023年自动化综合实践项目要点讲解--陈20230208.mp4</FileName></Panel>
        <Panel $w={157} $pl={13}>
          <WindowIcons>
            <Svg w={14} h={16}><path d="M3 0h8v1.500H9.500V7L13 9.500V11H1V9.500L4.500 7V1.500H3zM6.500 11h1v5h-1zM3 14.500h8V16H3z" fill="#8a8a8a" /></Svg>
            <Svg w={16} h={16}><path d="M2 13h12" stroke="#8a8a8a" strokeWidth="2" /></Svg>
            <Svg w={16} h={16}><path d="M1 1h9v9H1z" stroke="#8a8a8a" strokeWidth="1.300" /><path d="M0 2h11" stroke="#8a8a8a" strokeWidth="3" /><path d="M14 7v7.300H5.500" stroke="#8a8a8a" strokeWidth="1.300" /></Svg>
            <Svg w={16} h={16}><path d="M2 6V2h4M10 2h4v4M14 10v4h-4M6 14H2v-4" stroke="#8a8a8a" strokeWidth="1.100" /><path d="M2 2l4 4M14 2l-4 4M14 14l-4-4M2 14l4-4" stroke="#707070" strokeWidth="1" /></Svg>
            <Svg w={14} h={14}><path d="M1.500 1.500l11 11M12.500 1.500l-11 11" stroke="#8a8a8a" strokeWidth="1.200" /></Svg>
          </WindowIcons>
        </Panel>
      </PlayerTitle>

      <Stage>
        <WordTitle>
          <Slot $w={73}><Svg w={73} h={24}><path d="M1 1h21v22H1z" stroke="#e6ebf3" strokeWidth="1.800" /><path d="M2 14h19v9H2z" fill="#e6ebf3" /><path d="M7 16h9v6H7z" fill="#2f5a99" /><path d="M12 16v6" stroke="#e6ebf3" strokeWidth="2.500" /></Svg></Slot>
          <Slot $w={85}><Svg w={85} h={24}><path d="M2.500 8H16q8 0 8 7.500T15 23" stroke="#5c7eb3" strokeWidth="3" /><path d="M10 1L3 8l7 7" stroke="#5c7eb3" strokeWidth="3" /><path d="M44 9h9l-4.500 6z" fill="#5c7eb3" /></Svg></Slot>
          <Slot $w={86}><Svg w={86} h={24}><path d="M6 4.500a10 10 0 1 0 13 1M11 1.500h9v9" stroke="#5c7eb3" strokeWidth="2.800" /></Svg></Slot>
          <Slot $w={616}><Svg w={616} h={10}><path d="M1 1.500h9" stroke="#dfe6ef" strokeWidth="1.300" /><path d="M1 4h9L5.500 10z" fill="#dfe6ef" /></Svg></Slot>
          <DocName>实物制作和得分的组成20230208.docx - Word</DocName>
          <Slot $w={83}><Svg w={83} h={24}><path d="M1 3.500h22.500V20H1zM1 7h22.500M12.300 20V10M7.500 14l4.800-5 4.800 5" stroke="#e6ebf3" strokeWidth="1.600" /></Svg></Slot>
          <Slot $w={78}><Svg w={78} h={24}><path d="M0 16h18" stroke="#eef2f7" strokeWidth="3.500" /></Svg></Slot>
          <Slot $w={83}><Svg w={83} h={24}><path d="M1 9h16v14H1zM1 11h16M6 8V1h16v14h-4M6 3h16" stroke="#e6ebf3" strokeWidth="1.800" /></Svg></Slot>
          <Slot $w={20}><Svg w={20} h={24}><path d="M3 5l13 14M16 5L3 19" stroke="#eef2f7" strokeWidth="4" /></Svg></Slot>
        </WordTitle>
        <TabBar>
          <Tab $w={109} $pr={7}>文件</Tab>
          <Tab $w={74} $active>开始</Tab>
          <Tab $w={76}>插入</Tab><Tab $w={76}>设计</Tab><Tab $w={75}>布局</Tab><Tab $w={76}>引用</Tab>
          <Tab $w={76} $pr={1}>邮件</Tab><Tab $w={76} $pr={1}>审阅</Tab><Tab $w={75} $pr={1}>视图</Tab><Tab $w={119} $pr={2}>百度网盘</Tab>
          <Ask>
            <Svg w={18} h={24}><path d="M6 18q0-3-2-5.500Q1 9 2.500 5.500 4.500 1 9 1t6.500 4.500Q17 9 14 12.500q-2 2.500-2 5.500zM6 21h6M7 23.500h4" stroke="#a9bedb" strokeWidth="1.500" /></Svg>
            告诉我您想要做什么...
          </Ask>
          <Tab $w={78}>登录</Tab>
          <Share>
            <Svg w={27} h={28}><circle cx="13" cy="8.500" r="7.500" stroke="#e6ebf3" strokeWidth="2" /><path d="M1 28q1-11 9-12M20 17v11M14.500 22.500h12" stroke="#e6ebf3" strokeWidth="2" /></Svg>
            共享
          </Share>
        </TabBar>
        <RibbonBar />
        <Document />
        <Status>
          <StatusItem $w={178}>第 1 页，共 1 页</StatusItem>
          <StatusItem $w={110}>138 个字</StatusItem>
          <StatusItem $w={46}>
            <Svg w={26} h={22}><path d="M1 1h9l3 2 3-2h8M1 1v18h9l3 2.500 3-2.500h8M13 3v18" stroke="#777" strokeWidth="1.300" /><path d="M16 7l7 9M23 7l-7 9" stroke="#555" strokeWidth="2.500" /></Svg>
          </StatusItem>
          <StatusItem $w={110}>中文(中国)</StatusItem>
          <Views>
            <ViewButton><Svg w={24} h={22}><path d="M1 1h9l2 1.500L14 1h9v18h-9l-2 1.500L10 19H1zM12 3v18M3.500 5h6M3.500 8.500h6M3.500 12h6M3.500 15.500h6M14.500 5h6M14.500 8.500h6M14.500 12h6M14.500 15.500h6" stroke="#6c6c6c" strokeWidth="1.400" /></Svg></ViewButton>
            <ViewButton $on><Svg w={22} h={21}><path d="M1 1h20v19H1zM4 5h14M4 8.500h14M4 12h14M4 15.500h14" stroke="#666" strokeWidth="1.400" /></Svg></ViewButton>
            <ViewButton><Svg w={24} h={22}><path d="M10 19H1V1h19v7M4 5h13M4 8.500h13M4 12h8M4 15.500h6" stroke="#6c6c6c" strokeWidth="1.400" /><circle cx="17" cy="15" r="6.700" fill="#7c7c7c" /><path d="M14 11l5 1 1 4-3 3-1-4z" fill="#dfdfdf" /></Svg></ViewButton>
          </Views>
        </Status>
        <WindowsBar />

        <Timer>05:03</Timer>
        <ImeBar>
          <ImeLogo>
            <Svg w={54} h={54}>
              <path d="M6 6L42 0q4-.500 5 3l7 36q0 5-4 7-14 7-32 8-4 0-5-4L0 11q0-4 6-5z" fill="#f0641e" />
              <path d="M43 13q-14-3-25 0-9 4-3 8 5 3 14 4 15 2 13 8-4 7-26 8" stroke="#fff" strokeWidth="7" />
            </Svg>
          </ImeLogo>
          <ImeStrip>
            <span>中</span>
            <Svg w={20} h={20}><circle cx="4" cy="6" r="2.800" stroke="#1070d8" strokeWidth="2.600" /><path d="M13 12a3 3 0 1 1 6 0q0 5-5 8 2-3 1-5-2-1-2-3z" fill="#1070d8" /></Svg>
            <Svg w={20} h={27}><rect x="5" width="10" height="17" rx="5" fill="#1070d8" /><path d="M1.500 12q1 8 8.500 8t8.500-8M7 25.500h6" stroke="#1070d8" strokeWidth="2.800" /></Svg>
            <Svg w={26} h={20}><rect x="1.500" y="1.500" width="23" height="17.500" rx="2.500" stroke="#1070d8" strokeWidth="2.800" /><path d="M4.500 6h18M4.500 10h18" stroke="#1070d8" strokeWidth="2.800" strokeDasharray="3 1.800" /><path d="M5 14.500h3M10 14.500h7M19 14.500h3" stroke="#1070d8" strokeWidth="2.500" /></Svg>
            <Svg w={27} h={25}><path d="M0 3l8-3q5.500 5 11 0l8 3-1 9-4.500 1v12H5.500V13L1 12z" fill="#1070d8" /></Svg>
            <Svg w={22} h={23}><rect width="10" height="10.500" rx="3" fill="#9a72ee" /><rect y="12.500" width="10" height="10.500" rx="3" fill="#c58bd8" /><rect x="12" y="12.500" width="10" height="10.500" rx="3" fill="#f08a70" /><rect x="13.500" y="1.500" width="7" height="7.500" rx="2" stroke="#f0855a" strokeWidth="3" /></Svg>
          </ImeStrip>
        </ImeBar>
      </Stage>

      <SeekRow>
        <Seek $w={2414} $rest="#444"><Played style={{ width: (303 / 830) * 2414 + 3 }} /><Knob /></Seek>
        <Svg w={33} h={12}><path d="M12 3.500h3L21 0v12l-6-3.500h-3z" fill="#7b7b7b" /><path d="M23 4v4M25.500 2v8" stroke="#7b7b7b" strokeWidth="1.300" /></Svg>
        <Seek $w={87} $rest="#000"><Played style={{ width: 53 }} /><Knob /></Seek>
      </SeekRow>
      <Controls>
        <ControlButton><Svg w={11} h={14}><path d="M.5 0v14L11.500 7z" fill="#e6e6e6" /></Svg></ControlButton>
        <ControlButton><Svg w={11} h={11}><rect width="11" height="11" rx="1" fill="#e6e6e6" /></Svg></ControlButton>
        <ControlButton><Svg w={12} h={12}><path d="M0 0h2.500v5.500L12 0v12L2.500 6.500V12H0z" fill="#e6e6e6" /></Svg></ControlButton>
        <ControlButton><Svg w={12} h={12}><path d="M12 0H9.500v5.500L0 0v12l9.500-5.500V12H12z" fill="#e6e6e6" /></Svg></ControlButton>
        <ControlButton><Svg w={11} h={11}><path d="M5.500 0L11 6H0zM0 8.500h11V11H0z" fill="#e6e6e6" /></Svg></ControlButton>
        <Panel $pl={12}>
          <Time $c="#f2f2f2" $w={58}>00:05:03</Time>
          <Time $c="#888" $w={11}>/</Time>
          <Time $c="#888" $w={58}>00:13:50</Time>
          <Badge $w={35} $bg="#303030">S/W</Badge>
          <Badge $w={41} $bg="#262626">AVC1</Badge>
          <Badge $w={34} $bg="#262626">AAC</Badge>
          <Extras>
            <Svg w={26} h={19}><Glyph x={2} y={10} s={12} c="#7e7e7e" w={600}>360</Glyph><circle cx="25" cy="1" r="1" fill="#7e7e7e" /><path d="M1 12q4 4 11 4M9 13.500l3 2.500-3 2.500M17 15.500q5-.500 8-3.500" stroke="#7e7e7e" strokeWidth="1.300" /></Svg>
            <Svg w={18} h={17}><Glyph x={0} y={11} s={13.500} c="#7e7e7e" w={600}>3D</Glyph><path d="M0 15.500h17" stroke="#7e7e7e" strokeWidth="1.200" /></Svg>
            <Svg w={22} h={17}><path d="M0 1.500h15M0 5.500h7M0 9.500h6M0 13.500h6" stroke="#d9bd10" strokeWidth="1.300" /><circle cx="13" cy="9" r="4.200" stroke="#fbd800" strokeWidth="2.200" /><path d="M16 12l4 4.500" stroke="#fbd800" strokeWidth="3" /></Svg>
            <Svg w={16} h={16}><rect width="16" height="16" rx="2.500" fill="#808080" /><path d="M3 4.500h10v7H3z" fill="#1d1d1d" /><path d="M4 6.500h8M4 9.500h8" stroke="#808080" strokeWidth="1.200" /></Svg>
            <Svg w={18} h={18}>{[0, 45, 90, 135].map(a => <path key={a} transform={`rotate(${a} 9 9)`} d="M9 0v18" stroke="#7e7e7e" strokeWidth="3" />)}<circle cx="9" cy="9" r="4.700" stroke="#7e7e7e" strokeWidth="3.500" fill="#1d1d1d" /></Svg>
          </Extras>
        </Panel>
        <ControlButton $w={51}><Svg w={16} h={13}><path d="M0 1h16M0 6.500h16M0 12h16" stroke="#e6e6e6" strokeWidth="1.500" /></Svg></ControlButton>
      </Controls>

      <Meter $y={87} $c="#d99a3a" />
      <Meter $y={110} $c="#82e01f" />
    </Player>
  );
}
